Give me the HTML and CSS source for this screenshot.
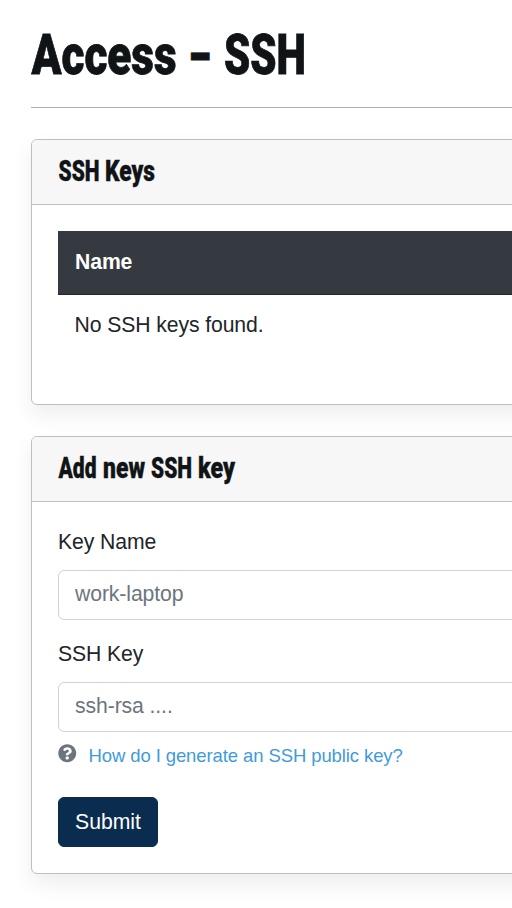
FILE: index.html
```html
<!DOCTYPE html>
<html lang="en">
<head>
<meta charset="utf-8">
<title>Access – SSH</title>
<link rel="stylesheet" href="styles.css">
</head>
<body>
<main class="page">
  <h1 class="title">
    <svg class="title-text" width="290" height="64">
      <text x="0.5" y="50" textLength="145" lengthAdjust="spacingAndGlyphs">Access</text>
      <text x="157.5" y="52" textLength="22" lengthAdjust="spacingAndGlyphs">–</text>
      <text x="193" y="50" textLength="82" lengthAdjust="spacingAndGlyphs">SSH</text>
    </svg>
  </h1>
  <section class="card keys">
    <h2 class="card-header">
      <svg class="header-text" width="200" height="34">
        <text x="0.5" y="26" textLength="41" lengthAdjust="spacingAndGlyphs">SSH</text>
        <text x="47" y="26" textLength="50" lengthAdjust="spacingAndGlyphs">Keys</text>
      </svg>
    </h2>
    <div class="card-body">
      <table class="table">
        <thead><tr><th>Name</th></tr></thead>
        <tbody><tr><td>No SSH keys found.</td></tr></tbody>
      </table>
    </div>
  </section>
  <section class="card add">
    <h2 class="card-header">
      <svg class="header-text" width="200" height="34">
        <text x="0.5" y="26" textLength="38" lengthAdjust="spacingAndGlyphs">Add</text>
        <text x="45" y="26" textLength="42" lengthAdjust="spacingAndGlyphs">new</text>
        <text x="93" y="26" textLength="41" lengthAdjust="spacingAndGlyphs">SSH</text>
        <text x="140" y="26" textLength="37" lengthAdjust="spacingAndGlyphs">key</text>
      </svg>
    </h2>
    <form class="card-body">
      <label class="label" for="name">Key Name</label>
      <input class="input" id="name" type="text" placeholder="work-laptop">
      <label class="label" for="key">SSH Key</label>
      <input class="input" id="key" type="text" placeholder="ssh-rsa ....">
      <div class="help">
        <svg class="help-icon" viewBox="0 0 512 512"><path d="M504 256c0 136.997-111.043 248-248 248S8 392.997 8 256C8 119.083 119.043 8 256 8s248 111.083 248 248zM262.655 90c-54.497 0-89.255 22.957-116.549 63.758-3.536 5.286-2.353 12.415 2.715 16.258l34.699 26.31c5.205 3.947 12.621 3.008 16.665-2.122 17.864-22.658 30.113-35.797 57.303-35.797 20.429 0 45.698 13.148 45.698 32.958 0 14.976-12.363 22.667-32.534 33.976C247.128 238.528 216 254.941 216 296v4c0 6.627 5.373 12 12 12h56c6.627 0 12-5.373 12-12v-1.333c0-28.462 83.186-29.647 83.186-106.667 0-58.002-60.165-102-116.531-102zM256 338c-25.365 0-46 20.635-46 46 0 25.364 20.635 46 46 46s46-20.636 46-46c0-25.365-20.635-46-46-46z"/></svg>
        <a class="help-link" href="#">How do I generate an SSH public key?</a>
      </div>
      <button class="submit" type="button">Submit</button>
    </form>
  </section>
</main>
</body>
</html>
```
FILE: styles.css
```css
* {
  box-sizing: border-box;
}

body {
  margin: 0;
  background: #fff;
  color: #212529;
  font: 21.2px/31px "Liberation Sans", Arial, sans-serif;
  letter-spacing: -0.1px;
}

.page {
  min-height: 908px;
  padding: 24px 0 0 31px;
  overflow: hidden;
}

.title {
  height: 84px;
  margin: 0 0 31px;
  border-bottom: 1px solid #a9b0b6;
}

.title-text,
.header-text {
  display: block;
  overflow: visible;
  fill: #101416;
  stroke: #101416;
  font-family: Roboto, sans-serif;
  font-weight: 900;
  letter-spacing: 0;
}

.title-text {
  font-size: 56px;
  stroke-width: 0.8px;
}

.header-text {
  font-size: 29px;
  stroke-width: 0.4px;
}

.card {
  margin: 0 -40px 32px 0;
  border: 1px solid #bfbfbf;
  border-radius: 6px;
  background: #fff;
  box-shadow: 0 10px 21px rgba(0, 0, 0, 0.07);
}

.keys {
  height: 266px;
  margin-bottom: 31px;
}

.add {
  height: 438px;
}

.card-header {
  height: 65px;
  margin: 0;
  padding: 15px 26px;
  border-bottom: 1px solid #bfbfbf;
  border-radius: 5px 5px 0 0;
  background: #f7f7f7;
}

.card-body {
  padding: 24px 26px;
}

.table {
  width: 100%;
  margin-top: 2px;
  border-collapse: collapse;
}

.table th,
.table td {
  padding: 14px 16px 17px;
  text-align: left;
}

.table th {
  border: 1px solid #343a40;
  border-bottom-color: #22272c;
  background: #343a40;
  color: #fff;
}

.label {
  display: block;
  margin-bottom: 13px;
}

.input {
  display: block;
  width: 100%;
  height: 50px;
  margin-bottom: 18px;
  padding: 0 16px 2px;
  border: 1px solid #ced4da;
  border-radius: 6px;
  background: #fff;
  font: inherit;
  letter-spacing: inherit;
}

.input::placeholder {
  color: #6c757d;
  opacity: 1;
}

.help {
  display: flex;
  align-items: center;
  gap: 12px;
  height: 28px;
  margin-top: -9px;
  font-size: 18.5px;
}

.help-icon {
  width: 18.5px;
  height: 18.5px;
  margin-top: -3px;
  fill: #6c757d;
}

.help-link {
  color: #3f9bdc;
  text-decoration: none;
}

.submit {
  display: block;
  width: 100px;
  height: 50px;
  margin-top: 28px;
  padding: 0 0 2px;
  border: 1px solid #0a2c4e;
  border-radius: 6px;
  background: #0a2c4e;
  color: #fff;
  font: inherit;
}
```
